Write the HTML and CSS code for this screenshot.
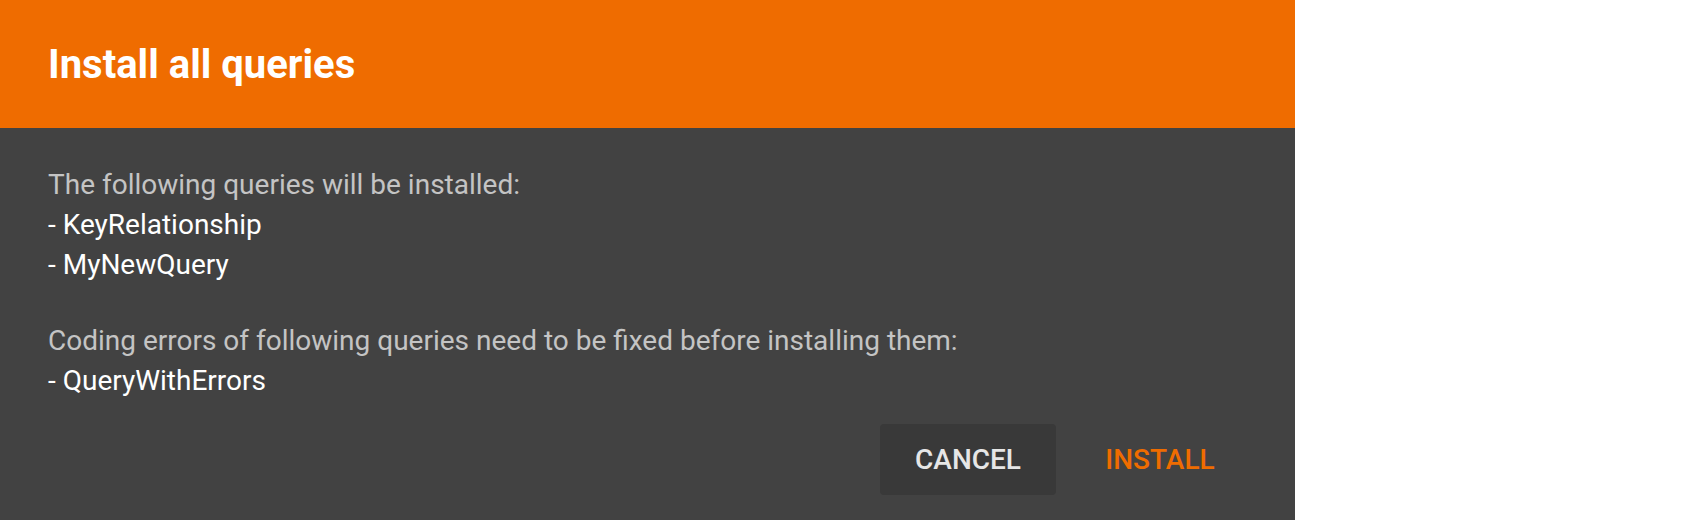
FILE: index.html
```html
<!DOCTYPE html>
<html>
<head>
<meta charset="utf-8">
<link rel="stylesheet" href="styles.css">
</head>
<body>
<div class="dialog">
  <div class="dialog-header">
    <h2 class="dialog-title">Install all queries</h2>
  </div>
  <div class="dialog-content">
    <div class="note">The following queries will be installed:</div>
    <div class="item">- KeyRelationship</div>
    <div class="item">- MyNewQuery</div>
    <div class="spacer"></div>
    <div class="note">Coding errors of following queries need to be fixed before installing them:</div>
    <div class="item">- QueryWithErrors</div>
  </div>
  <div class="dialog-actions">
    <button class="btn btn-cancel">Cancel</button>
    <button class="btn btn-primary">Install</button>
  </div>
</div>
</body>
</html>
```

FILE: styles.css
```css
html, body {
  margin: 0;
  padding: 0;
  background: #ffffff;
}

body {
  font-family: Roboto, "Noto Sans", "Liberation Sans", sans-serif;
  width: 1698px;
  height: 520px;
  overflow: hidden;
}

.dialog {
  width: 1295px;
  height: 520px;
  background: #424242;
  display: flex;
  flex-direction: column;
}

.dialog-header {
  height: 128px;
  background: #ef6c00;
  display: flex;
  align-items: center;
  padding: 0 48px;
  box-sizing: border-box;
}

.dialog-title {
  margin: 0;
  font-size: 40px;
  font-weight: 700;
  color: #ffffff;
  line-height: normal;
}

.dialog-content {
  padding: 37px 48px 0 48px;
  font-size: 28px;
  line-height: 40px;
}

.note {
  color: #c4c4c4;
}

.item {
  color: #ffffff;
}

.spacer {
  height: 36px;
}

.dialog-actions {
  display: flex;
  justify-content: flex-end;
  gap: 16px;
  padding: 23px 47px 0 0;
}

.btn {
  min-width: 176px;
  height: 71px;
  padding: 0 16px;
  border: none;
  border-radius: 4px;
  font-family: Roboto, "Noto Sans", "Liberation Sans", sans-serif;
  font-size: 28px;
  font-weight: 500;
  text-transform: uppercase;
  background: transparent;
  cursor: pointer;
}

.btn-cancel {
  background: #393939;
  color: #e6e6e6;
}

.btn-primary {
  color: #ef6c00;
}
```
